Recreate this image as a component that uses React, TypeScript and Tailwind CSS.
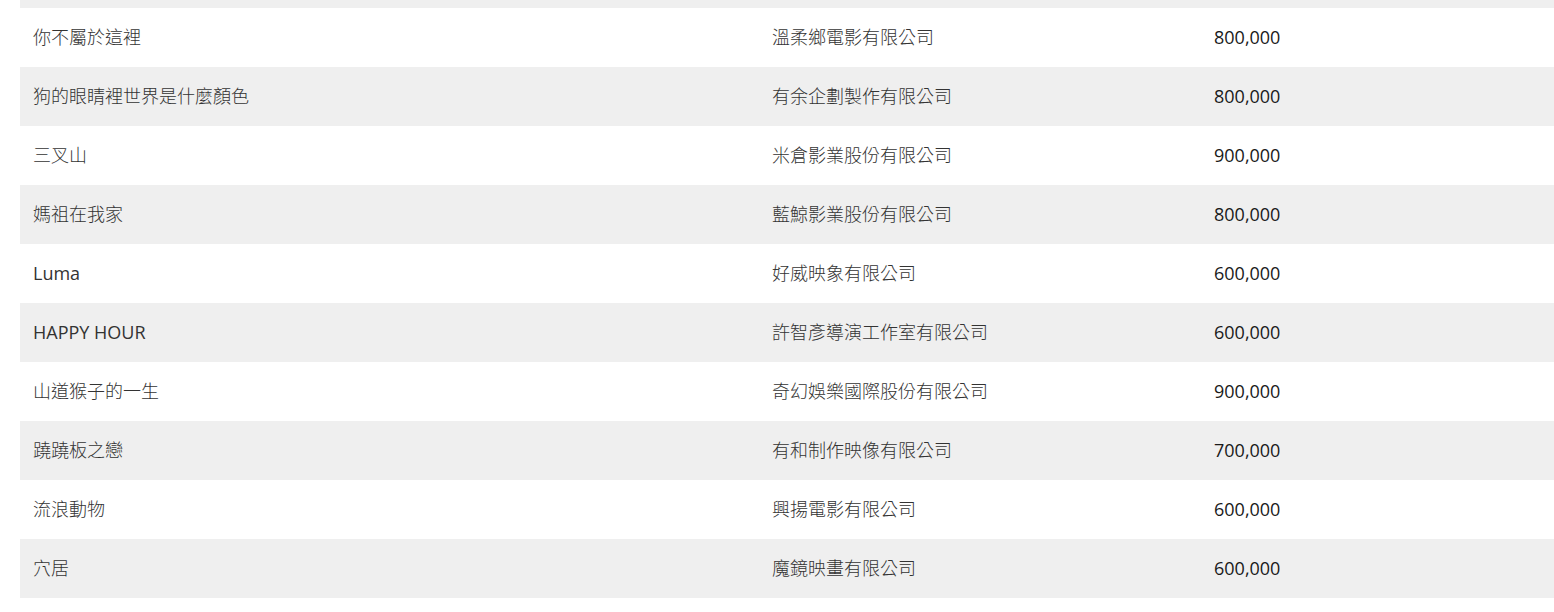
const rows = [
  { title: "你不屬於這裡", company: "溫柔鄉電影有限公司", amount: "800,000" },
  { title: "狗的眼睛裡世界是什麼顏色", company: "有余企劃製作有限公司", amount: "800,000" },
  { title: "三叉山", company: "米倉影業股份有限公司", amount: "900,000" },
  { title: "媽祖在我家", company: "藍鯨影業股份有限公司", amount: "800,000" },
  { title: "Luma", company: "好威映象有限公司", amount: "600,000" },
  { title: "HAPPY HOUR", company: "許智彥導演工作室有限公司", amount: "600,000" },
  { title: "山道猴子的一生", company: "奇幻娛樂國際股份有限公司", amount: "900,000" },
  { title: "蹺蹺板之戀", company: "有和制作映像有限公司", amount: "700,000" },
  { title: "流浪動物", company: "興揚電影有限公司", amount: "600,000" },
  { title: "穴居", company: "魔鏡映畫有限公司", amount: "600,000" },
];

const isLatin = (s: string) => /^[\x00-\x7f]+$/.test(s);

export default function App() {
  return (
    <div
      className="h-[612px] overflow-hidden bg-white"
      style={{ fontFamily: '"Open Sans", "Noto Sans CJK TC", sans-serif' }}
    >
      <div className="ml-[20px]">
        <div className="h-[8px] bg-[#efefef]" />
        {rows.map((r, i) => (
          <div
            key={r.title}
            className={`flex h-[59px] items-center text-[18px] ${
              i % 2 === 1 ? "bg-[#efefef]" : "bg-white"
            }`}
          >
            <div
              className={`w-[739px] pl-[13px] text-[#333333] ${
                isLatin(r.title) ? "font-normal" : "font-light"
              }`}
            >
              {r.title}
            </div>
            <div className="w-[442px] pl-[13px] font-light text-[#333333]">{r.company}</div>
            <div className="flex-1 pl-[13px] font-medium text-[#1a1a1a]">{r.amount}</div>
          </div>
        ))}
      </div>
    </div>
  );
}
